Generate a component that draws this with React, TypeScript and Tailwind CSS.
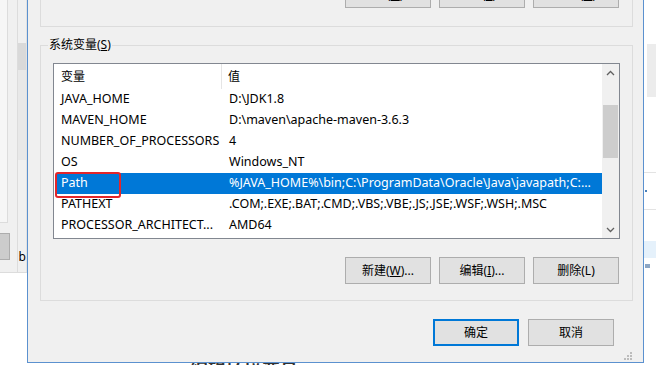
import React from 'react';

const FONT = { fontFamily: '"Noto Sans", "Noto Sans CJK SC", sans-serif' };

const rows: [string, string][] = [
  ['JAVA_HOME', 'D:\\JDK1.8'],
  ['MAVEN_HOME', 'D:\\maven\\apache-maven-3.6.3'],
  ['NUMBER_OF_PROCESSORS', '4'],
  ['OS', 'Windows_NT'],
  ['Path', '%JAVA_HOME%\\bin;C:\\ProgramData\\Oracle\\Java\\javapath;C:...'],
  ['PATHEXT', '.COM;.EXE;.BAT;.CMD;.VBS;.VBE;.JS;.JSE;.WSF;.WSH;.MSC'],
  ['PROCESSOR_ARCHITECT...', 'AMD64'],
];

const WinButton = ({ children, primary = false }: { children: React.ReactNode; primary?: boolean }) => (
  <button
    className={
      'flex h-[27px] w-[86px] shrink-0 items-center justify-center bg-[#e1e1e1] text-[12px] leading-[16px] text-black ' +
      (primary ? 'border-2 border-[#0078d7]' : 'border border-[#adadad]')
    }
  >
    {children}
  </button>
);

const Chevron = ({ down = false }: { down?: boolean }) => (
  <svg width="9" height="6" viewBox="0 0 9 6" className={down ? 'rotate-180' : ''}>
    <path d="M1 5 L4.5 1.5 L8 5" fill="none" stroke="#606060" strokeWidth="1.3" />
  </svg>
);

export default function App() {
  return (
    <div className="flex h-[365px] w-[656px] overflow-hidden bg-white" style={FONT}>
      {/* background window, left */}
      <div className="flex w-[27px] shrink-0 flex-col">
        <div className="flex h-[273px] shrink-0 border-b border-[#dcdcdc] bg-[#f0f0f0]">
          <div className="flex w-[18px] flex-col border-r border-[#dcdcdc]">
            <div className="h-[223px] w-[8px] shrink-0 border-r border-b border-[#dcdcdc] bg-[#f6f6f6]" />
            <div className="mt-[10px] h-[27px] w-[10px] shrink-0 border-y border-r border-[#adadad] bg-[#cccccc]" />
          </div>
          <div className="flex flex-1 flex-col border-r border-[#e2e2e2]">
            <div className="mt-[43px] flex h-[117px] w-[8px] shrink-0 flex-col bg-[#e8e8e8]">
              <div className="h-[27px] bg-[#d9d9d9]" />
            </div>
            <span className="ml-[1px] mt-[90px] text-[12px] leading-[14px] text-black">b</span>
          </div>
        </div>
        <div className="flex-1 bg-white" />
      </div>

      {/* dialog */}
      <div className="flex w-[617px] shrink-0 flex-col">
        <div className="flex h-[363px] shrink-0 flex-col border-x border-b border-[#5b91cf] bg-[#f0f0f0] pl-[12px] pr-[10px]">
          {/* user variables group (cut off) */}
          <div className="flex h-[27px] shrink-0 justify-end border-x border-b border-[#dcdcdc] pr-[13px]">
            <div className="mt-[-19px] flex gap-[8px]">
              <WinButton>新建(<u>N</u>)...</WinButton>
              <WinButton>编辑(<u>E</u>)...</WinButton>
              <WinButton>删除(<u>D</u>)</WinButton>
            </div>
          </div>

          {/* system variables group */}
          <div className="relative mt-[18px] flex h-[256px] shrink-0 flex-col border border-[#dcdcdc] pl-[12px] pr-[12px]">
            <span className="absolute left-[7px] top-[-9px] bg-[#f0f0f0] px-[1px] text-[12px] leading-[16px] text-black">
              系统变量(<u>S</u>)
            </span>
            <div className="mt-[17px] flex h-[176px] w-[567px] shrink-0 border border-[#828790] bg-white">
              <div className="flex flex-1 flex-col text-[12.5px] text-black">
                <div className="flex h-[25px] shrink-0 items-stretch text-[12px]">
                  <div className="flex w-[168px] items-center border-r border-[#e5e5e5] pl-[7px]">变量</div>
                  <div className="flex items-center pl-[6px]">值</div>
                </div>
                {rows.map(([k, v]) => {
                  const sel = k === 'Path';
                  return (
                    <div key={k} className="relative flex h-[21px] shrink-0">
                      <div
                        className={
                          'ml-[3px] flex flex-1 items-center overflow-hidden whitespace-nowrap ' +
                          (sel ? 'bg-[#0078d7] text-white' : '')
                        }
                      >
                        <span className="w-[166px] shrink-0 pl-[4px]">{k}</span>
                        <span className="pl-[6px]">{v}</span>
                      </div>
                      {sel && (
                        <div className="absolute left-[1px] top-[-1px] h-[26px] w-[66px] rounded-[3px] border-[2.5px] border-[#e3262a]" />
                      )}
                    </div>
                  );
                })}
              </div>
              {/* scrollbar */}
              <div className="flex w-[17px] shrink-0 flex-col items-center bg-[#f0f0f0]">
                <div className="flex h-[17px] w-full shrink-0 items-center justify-center">
                  <Chevron />
                </div>
                <div className="mt-[24px] h-[53px] w-[15px] shrink-0 bg-[#cdcdcd]" />
                <div className="flex-1" />
                <div className="flex h-[17px] w-full shrink-0 items-center justify-center">
                  <Chevron down />
                </div>
              </div>
            </div>
            <div className="mt-[18px] flex shrink-0 justify-end gap-[8px] pr-[1px]">
              <WinButton>
                新建(<u>W</u>)...
              </WinButton>
              <WinButton>
                编辑(<u>I</u>)...
              </WinButton>
              <WinButton>删除(L)</WinButton>
            </div>
          </div>

          {/* dialog buttons */}
          <div className="mt-[18px] flex shrink-0 justify-end gap-[9px] pr-[19px]">
            <WinButton primary>确定</WinButton>
            <WinButton>取消</WinButton>
          </div>
          <div className="flex flex-1 items-end justify-end pb-[2px] pr-[1px]">
            <svg width="8" height="8" viewBox="0 0 8 8">
              <rect x="6" y="0" width="2" height="2" fill="#bcbcbc" />
              <rect x="3" y="3" width="2" height="2" fill="#bcbcbc" />
              <rect x="6" y="3" width="2" height="2" fill="#bcbcbc" />
              <rect x="0" y="6" width="2" height="2" fill="#bcbcbc" />
              <rect x="3" y="6" width="2" height="2" fill="#bcbcbc" />
              <rect x="6" y="6" width="2" height="2" fill="#bcbcbc" />
            </svg>
          </div>
        </div>
        <div className="h-[2px] shrink-0 overflow-hidden pl-[163px]">
          <div className="mt-[-3px] text-[18px] font-bold leading-[18px] text-[#333]">编辑环境变量</div>
        </div>
      </div>

      {/* background window, right */}
      <div className="flex flex-1 flex-col bg-white">
        <div className="ml-[3px] mt-[44px] h-[53px] w-[9px] shrink-0 bg-[#ececec]" />
        <div className="mt-[75px] h-px shrink-0 bg-[#e3e3e3]" />
        <div className="ml-[1px] mt-[17px] h-[2px] w-[2px] shrink-0 bg-[#4a7fb8]" />
        <div className="mt-[17px] h-px shrink-0 bg-[#e3e3e3]" />
        <div className="mt-[31px] h-[17px] shrink-0 bg-[#e5f1fb]" />
        <div className="ml-[1px] mt-[6px] h-[4px] w-[5px] shrink-0 bg-[#8ca6c4]" />
      </div>
    </div>
  );
}
